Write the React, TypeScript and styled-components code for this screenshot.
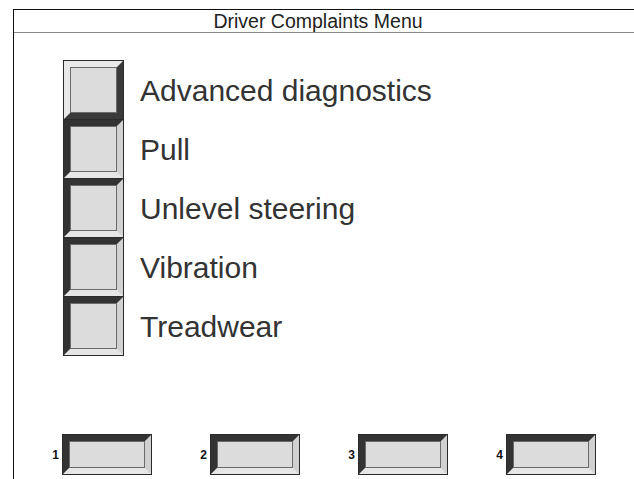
import React from "react";
import styled, { createGlobalStyle, css } from "styled-components";

const Global = createGlobalStyle`
  html, body { margin: 0; padding: 0; background: #ffffff; }
  body { font-family: "Liberation Sans", Arial, sans-serif; width: 634px; height: 479px; overflow: hidden; }
`;

const Screen = styled.div`
  width: 634px;
  height: 479px;
  padding: 9px 0 0 13px;
  box-sizing: border-box;
`;

const Frame = styled.div`
  border-top: 1px solid #111;
  border-left: 1px solid #111;
  height: 470px;
  box-sizing: border-box;
  display: flex;
  flex-direction: column;
`;

const Header = styled.div`
  height: 22px;
  border-bottom: 1px solid #8a8a8a;
  display: flex;
  align-items: center;
  justify-content: center;
  font-size: 19.5px;
  color: #222;
  padding-right: 12px;
`;

const Menu = styled.div`
  display: flex;
  flex-direction: column;
  padding: 27px 0 0 50px;
`;

const Row = styled.div`
  display: flex;
  align-items: center;
  gap: 17px;
  height: 59px;
`;

const bevel = (raised: boolean) =>
  raised
    ? css`
        border-color: #e9e9e9 #3a3a3a #3a3a3a #e9e9e9;
      `
    : css`
        border-color: #333333 #d2d2d2 #e6e6e6 #333333;
      `;

const SideButton = styled.div<{ $raised?: boolean }>`
  width: 47px;
  height: 46px;
  border-style: solid;
  border-width: 6px;
  ${(p) => bevel(!!p.$raised)}
  background: #dcdcdc;
  outline: 1px solid #2a2a2a;
  box-shadow: inset 0 0 0 1px #6a6a6a;
  flex: none;
`;

const Label = styled.span`
  font-size: 30px;
  color: #333;
  line-height: 1;
  padding-top: 2px;
`;

const Footer = styled.div`
  margin-top: auto;
  display: flex;
  gap: 45px;
  padding: 0 0 5px 34px;
`;

const KeyItem = styled.div`
  display: flex;
  align-items: center;
  gap: 4px;
`;

const KeyNum = styled.span`
  width: 11px;
  text-align: right;
  font-size: 12px;
  font-weight: bold;
  color: #111;
`;

const KeyButton = styled.div`
  width: 76px;
  height: 27px;
  border-style: solid;
  border-width: 6px;
  border-color: #333333 #d0d0d0 #e6e6e6 #333333;
  background: #dcdcdc;
  outline: 1px solid #2a2a2a;
  box-shadow: inset 0 0 0 1px #6a6a6a;
`;

const items = [
  "Advanced diagnostics",
  "Pull",
  "Unlevel steering",
  "Vibration",
  "Treadwear",
];

export default function App() {
  return (
    <>
      <Global />
      <Screen>
        <Frame>
          <Header>Driver Complaints Menu</Header>
          <Menu>
            {items.map((t, i) => (
              <Row key={t}>
                <SideButton $raised={i === 0} />
                <Label>{t}</Label>
              </Row>
            ))}
          </Menu>
          <Footer>
            {[1, 2, 3, 4].map((n) => (
              <KeyItem key={n}>
                <KeyNum>{n}</KeyNum>
                <KeyButton />
              </KeyItem>
            ))}
          </Footer>
        </Frame>
      </Screen>
    </>
  );
}
